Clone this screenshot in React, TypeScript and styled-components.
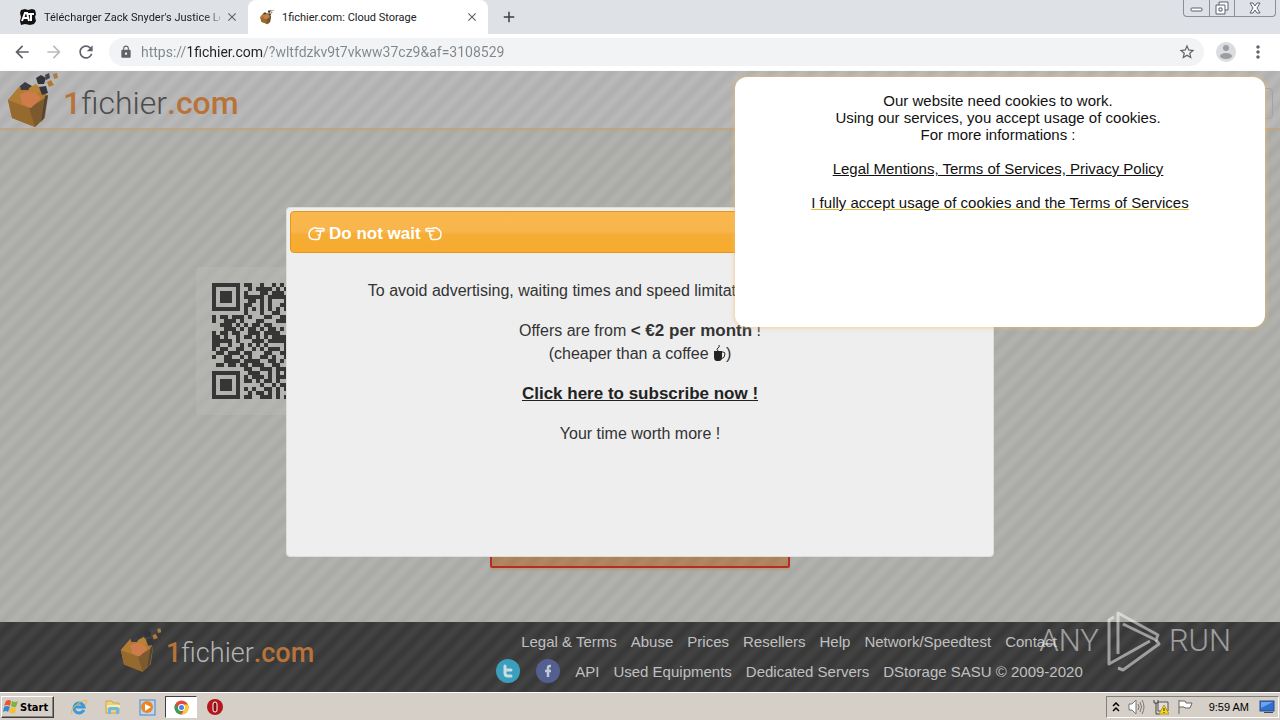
import React from "react";
import styled, { createGlobalStyle } from "styled-components";
import {
  MdArrowBack,
  MdArrowForward,
  MdRefresh,
  MdLock,
  MdStarBorder,
  MdClose,
  MdAdd,
  MdMoreVert,
} from "react-icons/md";

const GlobalStyle = createGlobalStyle`
  * { box-sizing: border-box; }
  body { margin: 0; font-family: "Liberation Sans", Arial, sans-serif; }
  button { font: inherit; color: inherit; background: none; border: 0; padding: 0; }
  svg { flex: none; }
`;

const uiFont = `Roboto, Tahoma, sans-serif`;

const Screen = styled.div`
  display: flex;
  flex-direction: column;
  min-height: 100vh;
`;

/* ---------- browser frame ---------- */

const TabStrip = styled.div`
  display: flex;
  height: 34px;
  padding-left: 8px;
  background: #dee1e6;
  font: 11px ${uiFont};
  color: #202124;
`;

const Tab = styled.div<{ $active?: boolean }>`
  display: flex;
  align-items: center;
  gap: 8px;
  width: 240px;
  padding: 0 8px 0 12px;
  border-radius: 8px 8px 0 0;
  background: ${(p) => (p.$active ? "#fff" : "transparent")};
`;

const TabTitle = styled.span<{ $fade?: boolean }>`
  flex: 1;
  overflow: hidden;
  white-space: nowrap;
  ${(p) => p.$fade && "mask-image: linear-gradient(90deg, #000 90%, transparent 105%);"}
`;

const IconButton = styled.button<{ $size: number; $color?: string }>`
  display: flex;
  align-items: center;
  justify-content: center;
  flex: none;
  width: ${(p) => p.$size}px;
  height: ${(p) => p.$size}px;
  color: ${(p) => p.$color || "#5f6368"};
`;

const TabClose = styled(IconButton)`
  margin-left: -4px;
`;

const NewTab = styled(IconButton)`
  margin: 3px 7px;
`;

const WindowButtons = styled.div`
  display: flex;
  height: 17px;
  margin: 0 4px 0 auto;
  border: 1px solid #8b8f9c;
  border-top: 0;
  border-radius: 0 0 4px 4px;
`;

const WindowButton = styled.button<{ $wide?: boolean }>`
  display: flex;
  align-items: center;
  justify-content: center;
  width: ${(p) => (p.$wide ? 41 : 25)}px;
  & + & { border-left: 1px solid #8b8f9c; }
`;

const Toolbar = styled.div`
  display: flex;
  align-items: center;
  height: 37px;
  padding: 0 12px 1px;
  background: #fff;
`;

const NavButtons = styled.div`
  display: flex;
  gap: 12px;
  margin-right: 13px;
`;

const Omnibox = styled.form`
  display: flex;
  align-items: center;
  flex: 1;
  height: 28px;
  padding: 0 8px 0 10px;
  border-radius: 14px;
  background: #f1f3f4;
`;

const UrlInput = styled.input`
  flex: 1;
  min-width: 0;
  padding: 0;
  margin-left: 8px;
  border: 0;
  outline: 0;
  font: 14px ${uiFont};
  color: transparent;
  background: linear-gradient(90deg, #80868b 47px, #202124 47px, #202124 122px, #80868b 122px);
  background-clip: text;
`;

const ToolbarEnd = styled.div`
  display: flex;
  align-items: center;
  gap: 12px;
  margin-left: 12px;
`;

/* ---------- 1fichier page ---------- */

const stripes = (a: string, b: string) => `
  background: linear-gradient(135deg, ${a} 10%, ${b} 30%, ${b} 35%, ${a} 55%, ${a} 60%, ${b} 80%, ${b} 85%, ${a}) 0 0 / 20px 20px;
`;

const Page = styled.div`
  position: relative;
  flex: 1;
  display: flex;
  flex-direction: column;
  ${stripes("#b1b2ad", "#a9aaa5")}
`;

const SiteHeader = styled.header`
  display: flex;
  align-items: flex-start;
  justify-content: space-between;
  height: 58px;
  padding: 1px 7px 0;
  border-bottom: 1px solid #c0a67f;
  box-shadow: 0 1px 2px rgba(200, 160, 100, 0.5);
  ${stripes("#b9b9b9", "#b0b0b0")}
`;

const Brand = styled.a<{ $small?: boolean }>`
  display: flex;
  align-items: center;
  gap: 4px;
  font: 300 ${(p) => (p.$small ? 27 : 32)}px Roboto, sans-serif;
  color: ${(p) => (p.$small ? "#b4b4b4" : "#4c4c4c")};
  text-decoration: none;
`;

const BrandName = styled.span`
  padding-top: 6px;
`;

const Accent = styled.span`
  font-weight: 500;
  color: #b8733a;
`;

const MenuButton = styled.button`
  width: 40px;
  height: 31px;
  margin-top: 16px;
  border: 1px solid #a3a3a3;
  border-radius: 4px;
`;

const Main = styled.main`
  flex: 1;
  display: flex;
  flex-direction: column;
  align-items: center;
  width: 100%;
  max-width: 888px;
  margin: 0 auto;
  padding-top: 138px;
`;

const QrCard = styled.div`
  display: flex;
  align-self: flex-start;
  padding: 16px;
  border-radius: 4px;
  background: rgba(190, 190, 190, 0.35);
`;

const DownloadButton = styled.button`
  width: 300px;
  height: 40px;
  margin: 113px 0 54px;
  border: 2px solid #b52a2a;
  border-radius: 2px;
  box-shadow: 0 2px 2px rgba(180, 150, 110, 0.7);
  ${stripes("#b18761", "#ab815a")}
`;

const SiteFooter = styled.footer`
  height: 70px;
  ${stripes("#434343", "#383838")}
`;

const FooterInner = styled.div`
  display: flex;
  max-width: 1040px;
  margin: 0 auto;
`;

const FooterBrand = styled.div`
  width: 298px;
  padding-top: 5px;
`;

const FooterNav = styled.nav`
  flex: 1;
  padding-top: 4px;
  font-size: 15px;
  color: #c0c0c0;
`;

const FooterRow = styled.div`
  display: flex;
  align-items: center;
  justify-content: center;
  gap: 14px;
  height: 30px;
  white-space: nowrap;
`;

const FooterLink = styled.a`
  color: inherit;
  text-decoration: none;
`;

const SocialLink = styled(FooterLink)`
  display: flex;
`;

const Overlay = styled.div`
  position: absolute;
  inset: 0;
  display: flex;
  align-items: center;
  justify-content: center;
`;

const Dialog = styled.section`
  width: 708px;
  height: 350px;
  padding: 3px;
  border: 1px solid #ddd;
  border-radius: 4px;
  background: #eee;
`;

const DialogTitle = styled.h2`
  display: flex;
  align-items: center;
  gap: 4px;
  height: 42px;
  margin: 0;
  padding: 4px 17px 0;
  border: 1px solid #e2961c;
  border-radius: 4px;
  background: linear-gradient(#f9b84f, #f8b54b 50%, #f6ad35 55%, #f6ab2f);
  font-size: 17px;
  color: #fff;
`;

const DialogBody = styled.div`
  padding-top: 26px;
  font-size: 16px;
  line-height: 23px;
  text-align: center;
  color: #333;
`;

const Paragraph = styled.p`
  margin: 0 0 17px;
`;

const Strong = styled.strong`
  font-size: 17px;
`;

const SubscribeLink = styled.a`
  font-size: 17px;
  font-weight: bold;
  color: #222;
`;

const CookieNotice = styled.aside`
  position: absolute;
  top: 6px;
  right: 15px;
  width: 530px;
  height: 250px;
  padding: 15px 4px 0 0;
  border-radius: 12px;
  background: #fff;
  box-shadow: 0 0 4px 1px rgba(240, 190, 110, 0.6);
  font-size: 15px;
  line-height: 17px;
  text-align: center;
  color: #111;
`;

const NoticeText = styled.p`
  margin: 0 0 17px;
`;

const NoticeLink = styled.a<{ $accept?: boolean }>`
  color: #111;
  ${(p) => p.$accept && "margin-left: 4px; text-decoration-color: #dcc030;"}
`;

const Watermark = styled.div`
  position: absolute;
  right: 49px;
  bottom: 20px;
  display: flex;
  align-items: center;
  gap: 7px;
  font: 300 31px/62px Roboto, sans-serif;
  color: rgba(255, 255, 255, 0.5);
  pointer-events: none;
`;

/* ---------- taskbar ---------- */

const Taskbar = styled.div`
  display: flex;
  align-items: center;
  height: 28px;
  padding: 2px 1px 1px;
  border-top: 1px solid #fff;
  background: #d6cfc7;
`;

const StartButton = styled.button`
  display: flex;
  align-items: center;
  gap: 1px;
  height: 22px;
  width: 53px;
  padding: 0 1px;
  border: 1px solid;
  border-color: #fff #404040 #404040 #fff;
  box-shadow: inset -1px -1px #8a857e;
  font: bold 11px "DejaVu Sans Condensed", "DejaVu Sans", sans-serif;
  color: #000;
`;

const QuickLaunch = styled.div`
  display: flex;
  align-items: center;
  gap: 2px;
  margin-left: 9px;
`;

const TaskButton = styled.button<{ $pressed?: boolean }>`
  display: flex;
  align-items: center;
  justify-content: center;
  width: 32px;
  height: 22px;
  ${(p) => p.$pressed && "background: #fff; border: 1px solid; border-color: #404040 #fff #fff #404040;"}
`;

const Tray = styled.div`
  display: flex;
  align-items: center;
  gap: 8px;
  height: 22px;
  margin-left: auto;
  padding: 0 3px 0 5px;
  border: 1px solid;
  border-color: #808080 #fff #fff #808080;
  font: 11px "Liberation Sans", sans-serif;
  color: #000;
`;

const Clock = styled.time`
  margin: 0 2px 0 8px;
`;

/* ---------- drawings ---------- */

const Cube = ({ size }: { size: number }) => (
  <svg width={size} height={size + 4} viewBox="0 0 52 56" aria-hidden="true">
    <path d="M13 14 1 28 5 46 28 55 38 46 41 24 31 15Z" fill="#a8722c" />
    <path d="M1 28 22 36 28 55 5 46Z" fill="#96692f" />
    <path d="M22 36 38 26 37 46 28 55Z" fill="#7c5a2e" />
    <path d="M13 14 31 15 39 25 22 36 1 28Z" fill="#b07b35" />
    <path d="M13 22 25 18 34 26 24 36 15 32Z" fill="#cf7c4c" />
    <path d="M38 24 41 23 37 46 34 50Z" fill="#4c4640" />
    <path d="M13 14 18 10 25 14 21 18 14 18Z" fill="#3c3d42" />
    <path d="M22 16 29 12 34 17 30 22 23 20Z" fill="#b98337" />
    <path d="M32 15 39 14 41 21 35 23Z" fill="#35363b" />
    <path d="M29 6 34 3 39 6 37 12 31 12Z" fill="#33343a" />
    <path d="M38 3 42 1 43 6 39 8Z" fill="#45464c" />
    <path d="M40 10 44 8 47 13 42 15Z" fill="#b07a34" />
    <path d="M46 2 50 1 51 6 47 7Z" fill="#a97b45" />
  </svg>
);

const QR_ROWS = [
  "1111111011001001010",
  "1000001001011110101",
  "1011101010001101110",
  "1011101011111011111",
  "1011101001101010001",
  "1000001011001010011",
  "1111111010101010101",
  "0000000010001001100",
  "1011011101000110011",
  "1001110100011000111",
  "0011101010110110000",
  "0001110101101011010",
  "1011011001110111100",
  "1101001011010101111",
  "1111101000111011111",
  "1100100101010100001",
  "1011001100101011101",
  "0110111011000110011",
  "1001100101001101001",
  "0001111011110011010",
  "0110110110111001100",
  "0000000011001110111",
  "1111111001110010101",
  "1000001010111010111",
  "1011101011010110100",
  "1011101000001001011",
  "1011101010100110101",
  "1000001001011010100",
  "1111111011001110101",
];

const QrCode = () => (
  <svg width="116" height="116" viewBox="0 0 29 29" shapeRendering="crispEdges" role="img" aria-label="QR code">
    {QR_ROWS.map((row, y) =>
      row.split("").map((c, x) => (c === "1" ? <rect key={`${x}-${y}`} x={x} y={y} width="1" height="1" fill="#363636" /> : null))
    )}
  </svg>
);

const AtIcon = () => (
  <svg width="16" height="16" viewBox="0 0 16 16" aria-hidden="true">
    <path d="M1 1 5 0 8 1 12 0 15 1 16 5 15 8 16 12 14 15 10 16 5 15 1 16 0 12 1 8 0 4Z" fill="#111" />
    <path d="M2 12 5 4H7L9 12M3 9H8M8 5H14M11 5V12" fill="none" stroke="#fff" strokeWidth="2" />
  </svg>
);

const Hand = ({ left }: { left?: boolean }) => (
  <svg width="17" height="15" viewBox="0 0 17 15" fill="none" stroke="#fff" strokeWidth="1.5" strokeLinejoin="round" strokeLinecap="round" aria-hidden="true">
    <g transform={left ? "translate(17 0) scale(-1 1)" : undefined}>
      <path d="M8 5H15Q16.200 4.900 16.200 3.700 16.200 2.600 15 2.600H9.500Q7 1 5 2.300 1 4.500 1 8 1 13.500 6 13.500H9.500Q11.500 13.500 11 11.500 12.500 10.800 12 9 13 7 12 5.200M10 8.900H12" />
    </g>
  </svg>
);

const MugSvg = styled.svg`
  vertical-align: -3px;
`;

const Coffee = () => (
  <MugSvg width="13" height="18" viewBox="0 0 13 18" aria-hidden="true">
    <path d="M1 7H9V13Q9 17 6 17H4Q1 17 1 13Z" fill="#222" />
    <path d="M9 8H10Q12 8 12 10 12 14 8 15" fill="none" stroke="#222" />
    <path d="M5 7Q3 5 5 4 7 3 6 1" fill="none" stroke="#222" />
  </MugSvg>
);

const Social = ({ kind }: { kind: "t" | "f" }) => (
  <svg width="26" height="26" viewBox="0 0 26 26" aria-hidden="true">
    <circle cx="13" cy="13" r="12" fill={kind === "t" ? "#3a9fbd" : "#535f8f"} />
    {kind === "t" ? (
      <path d="M10 8V15Q10 18 13 18H16M10 12H16" fill="none" stroke="#c9dde3" strokeWidth="3" strokeLinecap="round" />
    ) : (
      <path d="M16 8H15Q13 8 13 10V19M10 13H16" fill="none" stroke="#c3c8d8" strokeWidth="2.500" />
    )}
  </svg>
);

const PlayMark = () => (
  <svg width="56" height="62" viewBox="0 0 56 62" fill="none" stroke="#fff" strokeOpacity="0.5" strokeWidth="3" strokeLinejoin="round" aria-hidden="true">
    <path d="M12 44V3L52 25 50 30 17 14" />
    <path d="M8 7 3 10V54L44 31" />
    <path d="M12 58 17 60 53 34 50 30" />
  </svg>
);

const WinFlag = () => (
  <svg width="16" height="16" viewBox="0 0 16 16" aria-hidden="true">
    <path d="M3 2Q6 0 8 2L7 7Q4 5 1 7Z" fill="#e8562a" />
    <path d="M9 2Q12 4 15 2L13 8Q10 9 8 7Z" fill="#7db53a" />
    <path d="M1 8Q4 6 7 8L5 13Q3 11 0 13Z" fill="#3c82d0" />
    <path d="M8 8Q10 10 13 9L12 14Q8 15 6 13Z" fill="#f5c02c" />
  </svg>
);

const IeIcon = () => (
  <svg width="18" height="18" viewBox="0 0 18 18" fill="none" aria-hidden="true">
    <path d="M14 12Q12 15 9 15A5 5 0 1 1 14 9H5" stroke="#3a9ad9" strokeWidth="3" />
    <path d="M2 16Q0 13 5 8T16 2Q18 3 15 7" stroke="#e8b93c" />
  </svg>
);

const FolderIcon = () => (
  <svg width="18" height="18" viewBox="0 0 18 18" aria-hidden="true">
    <path d="M2 3H8L9 5H15V15H2Z" fill="#eed27a" stroke="#c9a84c" />
    <path d="M3 7H16V10H3Z" fill="#f8ebb0" />
    <path d="M4 16V11Q4 9 6 9H13Q15 9 15 11V16H12V12H7V16Z" fill="#6db8e4" />
  </svg>
);

const MediaIcon = () => (
  <svg width="17" height="17" viewBox="0 0 17 17" aria-hidden="true">
    <rect x="1" y="1" width="15" height="15" fill="#b9d7f2" stroke="#4c86c6" />
    <circle cx="8" cy="8" r="6" fill="#ee8422" />
    <path d="M6 5 12 8 6 12Z" fill="#fff" />
  </svg>
);

const ChromeIcon = () => (
  <svg width="15" height="15" viewBox="0 0 30 30" aria-hidden="true">
    <circle cx="15" cy="15" r="14" fill="#e14a3b" />
    <path d="M3 8 12 22 15 29A14 14 0 0 1 3 8Z" fill="#2fa353" />
    <path d="M15 29 21 18 18 9H28A14 14 0 0 1 15 29Z" fill="#f8ca35" />
    <circle cx="15" cy="15" r="7" fill="#fff" />
    <circle cx="15" cy="15" r="5" fill="#4585ec" />
  </svg>
);

const OperaIcon = () => (
  <svg width="16" height="16" viewBox="0 0 16 16" aria-hidden="true">
    <circle cx="8" cy="8" r="8" fill="#b3161b" />
    <rect x="6" y="3" width="4" height="10" rx="2" fill="#8a0b10" stroke="#fff" />
  </svg>
);

const SoundIcon = () => (
  <svg width="17" height="16" viewBox="0 0 17 16" fill="none" stroke="#777" aria-hidden="true">
    <path d="M1 5H4L8 1V15L4 11H1Z" fill="#fff" />
    <path d="M10 5Q12 8 10 11M12 3Q15 8 12 13M14 1Q18 8 14 15" />
  </svg>
);

const NetworkIcon = () => (
  <svg width="16" height="16" viewBox="0 0 16 16" aria-hidden="true">
    <path d="M5 3H15V12H5Z" fill="#ddd" stroke="#555" />
    <path d="M1 1V4H5V1M3 4V15H7" fill="none" stroke="#444" />
    <path d="M11 6 16 15H6Z" fill="#f6d829" stroke="#b99a10" />
    <path d="M11 9V12M11 13V14" stroke="#222" />
  </svg>
);

const FlagIcon = () => (
  <svg width="16" height="16" viewBox="0 0 16 16" aria-hidden="true">
    <path d="M2 1V15M2 2H8L9 4H15L13 9H8L7 8H2" fill="#fff" stroke="#666" />
  </svg>
);

const MonitorIcon = () => (
  <svg width="16" height="14" viewBox="0 0 16 14" aria-hidden="true">
    <rect x="1" y="1" width="14" height="10" fill="#2f6fd0" stroke="#2b4d86" />
    <path d="M2 2H14L2 8Z" fill="#6ba2ea" />
    <path d="M5 12H14V13H5Z" fill="#445" />
  </svg>
);

const MiniIcon = ({ kind }: { kind: "min" | "max" | "close" }) => (
  <svg width="14" height="14" viewBox="0 0 14 14" fill="#fff" stroke="#5c6070" aria-hidden="true">
    {kind === "min" && <rect x="1" y="7" width="11" height="3" rx="1" />}
    {kind === "max" && (
      <>
        <path d="M4 1H13V9H4Z" />
        <path d="M1 4H10V13H1Z" />
        <path d="M4 7H7V10H4Z" />
      </>
    )}
    {kind === "close" && <path d="M2 2H5L7 5 9 2H12L9 7 12 12H9L7 9 5 12H2L5 7Z" />}
  </svg>
);

const Avatar = () => (
  <svg width="20" height="20" viewBox="0 0 20 20" aria-hidden="true">
    <circle cx="10" cy="10" r="10" fill="#dadce0" />
    <circle cx="10" cy="6" r="3" fill="#9a9da1" />
    <ellipse cx="10" cy="14" rx="6" ry="3" fill="#9a9da1" />
  </svg>
);

const topLinks = ["Legal & Terms", "Abuse", "Prices", "Resellers", "Help", "Network/Speedtest", "Contact"];
const bottomLinks = ["API", "Used Equipments", "Dedicated Servers"];

const BrandText = () => (
  <BrandName>
    <Accent>1</Accent>fichier<Accent>.com</Accent>
  </BrandName>
);

export default function App() {
  return (
    <Screen>
      <GlobalStyle />
      <TabStrip>
        <Tab>
          <AtIcon />
          <TabTitle $fade>Télécharger Zack Snyder's Justice Le</TabTitle>
          <TabClose $size={16} aria-label="Close tab"><MdClose size={14} /></TabClose>
        </Tab>
        <Tab $active>
          <Cube size={14} />
          <TabTitle>1fichier.com: Cloud Storage</TabTitle>
          <TabClose $size={16} aria-label="Close tab"><MdClose size={14} /></TabClose>
        </Tab>
        <NewTab $size={28} $color="#3c4043" aria-label="New tab"><MdAdd size={18} /></NewTab>
        <WindowButtons>
          <WindowButton aria-label="Minimize"><MiniIcon kind="min" /></WindowButton>
          <WindowButton aria-label="Restore"><MiniIcon kind="max" /></WindowButton>
          <WindowButton $wide aria-label="Close"><MiniIcon kind="close" /></WindowButton>
        </WindowButtons>
      </TabStrip>
      <Toolbar>
        <NavButtons>
          <IconButton $size={20} aria-label="Back"><MdArrowBack size={20} /></IconButton>
          <IconButton $size={20} $color="#b9bbbe" aria-label="Forward"><MdArrowForward size={20} /></IconButton>
          <IconButton $size={20} aria-label="Reload"><MdRefresh size={20} /></IconButton>
        </NavButtons>
        <Omnibox>
          <MdLock size={14} color="#5f6368" />
          <UrlInput aria-label="Address" defaultValue="https://1fichier.com/?wltfdzkv9t7vkww37cz9&af=3108529" />
          <IconButton type="button" $size={18} aria-label="Bookmark"><MdStarBorder size={18} /></IconButton>
        </Omnibox>
        <ToolbarEnd>
          <IconButton $size={20} aria-label="Profile"><Avatar /></IconButton>
          <IconButton $size={20} aria-label="Menu"><MdMoreVert size={20} /></IconButton>
        </ToolbarEnd>
      </Toolbar>

      <Page>
        <SiteHeader>
          <Brand href="#home" aria-label="1fichier.com"><Cube size={52} /><BrandText /></Brand>
          <MenuButton aria-label="Menu" />
        </SiteHeader>
        <Main>
          <QrCard><QrCode /></QrCard>
          <DownloadButton aria-label="Download" />
        </Main>
        <SiteFooter>
          <FooterInner>
            <FooterBrand>
              <Brand $small href="#home" aria-label="1fichier.com"><Cube size={42} /><BrandText /></Brand>
            </FooterBrand>
            <FooterNav>
              <FooterRow>
                {topLinks.map((t) => <FooterLink key={t} href="#link">{t}</FooterLink>)}
              </FooterRow>
              <FooterRow>
                <SocialLink href="#twitter" aria-label="Twitter"><Social kind="t" /></SocialLink>
                <SocialLink href="#facebook" aria-label="Facebook"><Social kind="f" /></SocialLink>
                {bottomLinks.map((t) => <FooterLink key={t} href="#link">{t}</FooterLink>)}
                <span>DStorage SASU © 2009-2020</span>
              </FooterRow>
            </FooterNav>
          </FooterInner>
        </SiteFooter>

        <Overlay>
          <Dialog role="dialog" aria-labelledby="dialog-title">
            <DialogTitle id="dialog-title">
              <Hand />Do not wait<Hand left />
            </DialogTitle>
            <DialogBody>
              <Paragraph>To avoid advertising, waiting times and speed limitations, subscribe right now</Paragraph>
              <Paragraph>
                Offers are from <Strong>&lt; €2 per month</Strong> !<br />
                (cheaper than a coffee <Coffee />)
              </Paragraph>
              <Paragraph><SubscribeLink href="#subscribe">Click here to subscribe now !</SubscribeLink></Paragraph>
              <Paragraph>Your time worth more !</Paragraph>
            </DialogBody>
          </Dialog>
        </Overlay>

        <CookieNotice>
          <NoticeText>
            Our website need cookies to work.<br />
            Using our services, you accept usage of cookies.<br />
            For more informations :
          </NoticeText>
          <NoticeText><NoticeLink href="#terms">Legal Mentions, Terms of Services, Privacy Policy</NoticeLink></NoticeText>
          <NoticeText><NoticeLink $accept href="#accept">I fully accept usage of cookies and the Terms of Services</NoticeLink></NoticeText>
        </CookieNotice>

        <Watermark><span>ANY</span><PlayMark /><span>RUN</span></Watermark>
      </Page>

      <Taskbar>
        <StartButton><WinFlag />Start</StartButton>
        <QuickLaunch>
          <TaskButton aria-label="Internet Explorer"><IeIcon /></TaskButton>
          <TaskButton aria-label="Explorer"><FolderIcon /></TaskButton>
          <TaskButton aria-label="Media Player"><MediaIcon /></TaskButton>
          <TaskButton $pressed aria-label="Chrome"><ChromeIcon /></TaskButton>
          <TaskButton aria-label="Opera"><OperaIcon /></TaskButton>
        </QuickLaunch>
        <Tray>
          <svg width="8" height="10" viewBox="0 0 8 10" fill="none" stroke="#000" aria-hidden="true">
            <path d="M1 4 4 1 7 4M1 9 4 6 7 9" strokeWidth="1.500" />
          </svg>
          <SoundIcon /><NetworkIcon /><FlagIcon />
          <Clock>9:59 AM</Clock>
          <MonitorIcon />
        </Tray>
      </Taskbar>
    </Screen>
  );
}
